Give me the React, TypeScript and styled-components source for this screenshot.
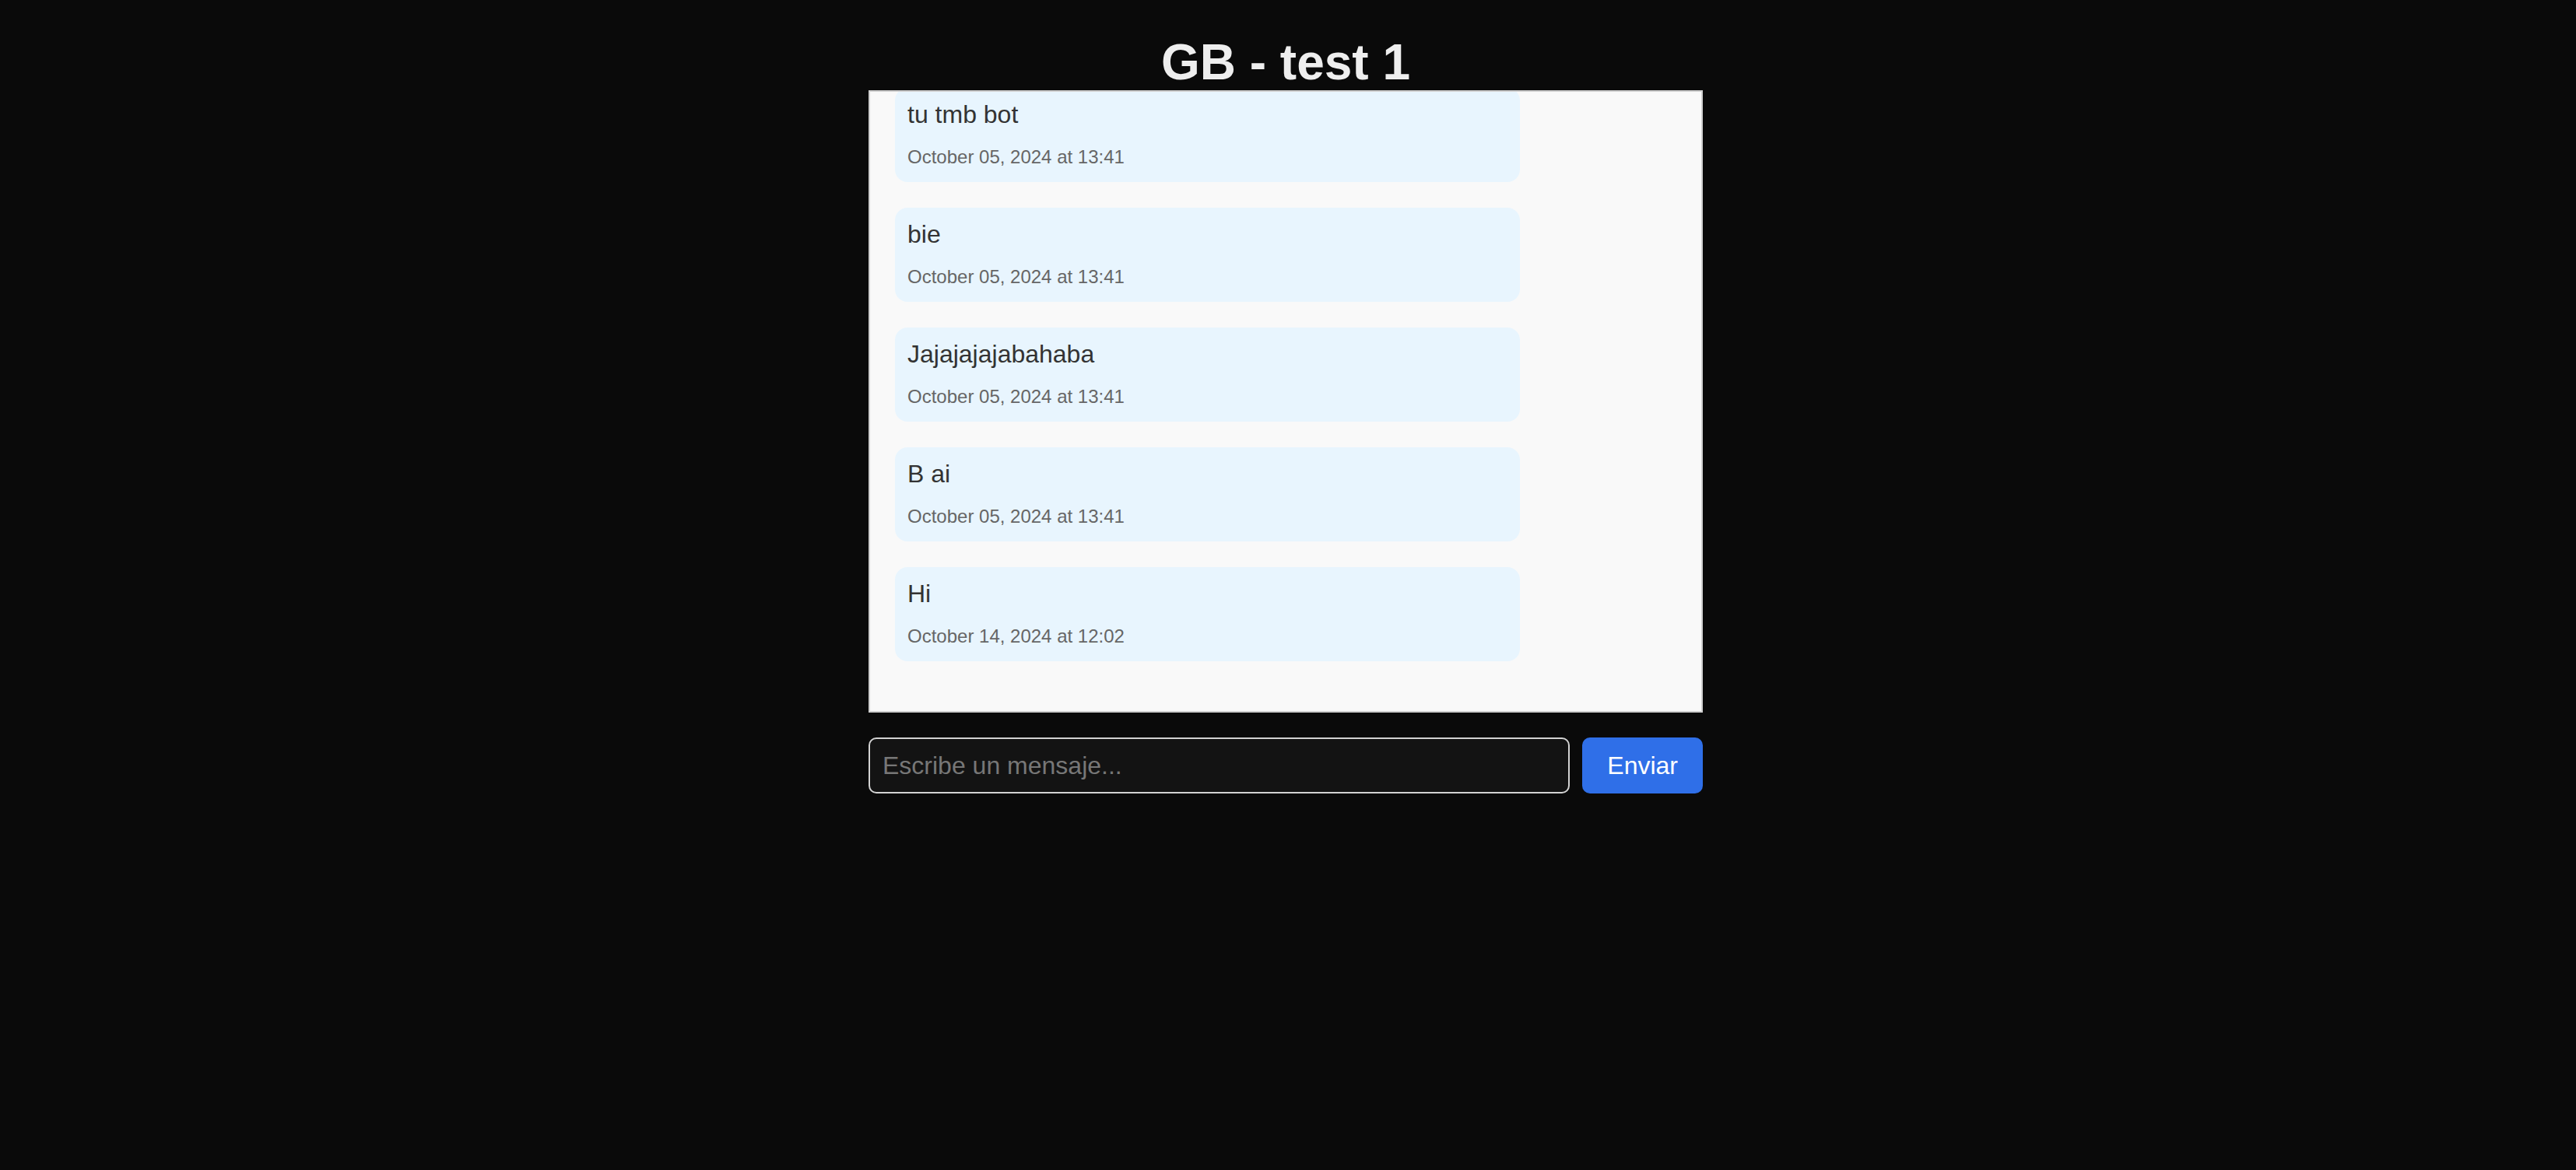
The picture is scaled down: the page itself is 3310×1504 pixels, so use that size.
import React, { useLayoutEffect, useRef } from "react";
import styled, { createGlobalStyle } from "styled-components";

const GlobalStyle = createGlobalStyle`
  html, body {
    margin: 0;
    padding: 0;
    background: #0a0a0a;
    font-family: "Liberation Sans", Arial, sans-serif;
  }
  * { box-sizing: border-box; }
`;

const Page = styled.div`
  min-height: 1504px;
  display: flex;
  flex-direction: column;
  align-items: center;
  padding-right: 6px;
`;

const Container = styled.div`
  width: 1072px;
  display: flex;
  flex-direction: column;
`;

const Title = styled.h1`
  margin: 44px 0 0;
  height: 72px;
  line-height: 72px;
  font-size: 64px;
  font-weight: 700;
  color: #eeeeee;
  text-align: center;
`;

const ChatBox = styled.div`
  height: 800px;
  border: 2px solid #cfcfcf;
  background: #f9f9f9;
  padding: 32px 32px 64px;
  display: flex;
  flex-direction: column;
  align-items: flex-start;
  gap: 33px;
  overflow-y: auto;
  scrollbar-width: none;
  &::-webkit-scrollbar { display: none; }
`;

const Bubble = styled.div`
  flex: none;
  width: 80%;
  background: #e8f5fe;
  border-radius: 16px;
  padding: 16px 16px 18px;
  display: flex;
  flex-direction: column;
  gap: 22px;
`;

const MessageText = styled.span`
  font-size: 32px;
  line-height: 37px;
  color: #333333;
`;

const Timestamp = styled.span`
  font-size: 24px;
  line-height: 28px;
  color: #666666;
`;

const InputRow = styled.form`
  margin-top: 32px;
  display: flex;
  gap: 16px;
  height: 72px;
`;

const MessageInput = styled.input`
  flex: 1;
  min-width: 0;
  height: 72px;
  border: 2px solid #d2d2d2;
  border-radius: 10px;
  background: #131313;
  color: #eeeeee;
  padding: 0 16px;
  font-family: "Liberation Sans", Arial, sans-serif;
  font-size: 32px;
  outline: none;
  &::placeholder { color: #777777; }
`;

const SendButton = styled.button`
  height: 72px;
  padding: 0 32px;
  border: none;
  border-radius: 10px;
  background: #2f6fe8;
  color: #ffffff;
  font-family: "Liberation Sans", Arial, sans-serif;
  font-size: 32px;
  cursor: pointer;
`;

const messages = [
  { text: "tu tmb bot", date: "October 05, 2024 at 13:41" },
  { text: "bie", date: "October 05, 2024 at 13:41" },
  { text: "Jajajajajabahaba", date: "October 05, 2024 at 13:41" },
  { text: "B ai", date: "October 05, 2024 at 13:41" },
  { text: "Hi", date: "October 14, 2024 at 12:02" },
];

export default function App() {
  const boxRef = useRef<HTMLDivElement>(null);

  useLayoutEffect(() => {
    const el = boxRef.current;
    if (el) el.scrollTop = el.scrollHeight;
  }, []);

  return (
    <>
      <GlobalStyle />
      <Page>
        <Container>
          <Title>GB - test 1</Title>
          <ChatBox ref={boxRef}>
            {messages.map((m, i) => (
              <Bubble key={i}>
                <MessageText>{m.text}</MessageText>
                <Timestamp>{m.date}</Timestamp>
              </Bubble>
            ))}
          </ChatBox>
          <InputRow onSubmit={(e) => e.preventDefault()}>
            <MessageInput placeholder="Escribe un mensaje..." />
            <SendButton type="submit">Enviar</SendButton>
          </InputRow>
        </Container>
      </Page>
    </>
  );
}
